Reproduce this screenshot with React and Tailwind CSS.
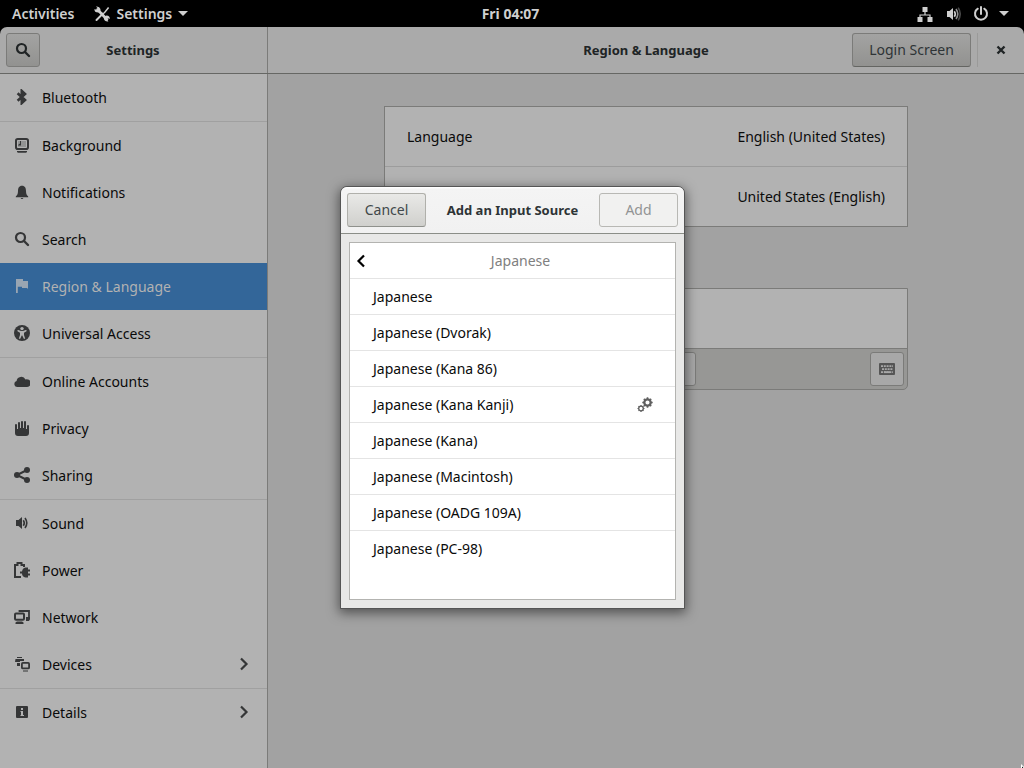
import React from "react";

const Svg = ({ children, size = 16, className = "" }) => (
  <svg
    width={size}
    height={size}
    viewBox="0 0 16 16"
    fill="currentColor"
    aria-hidden="true"
    className={`shrink-0 ${className}`}
  >
    {children}
  </svg>
);

const SearchIcon = (props) => (
  <Svg {...props}>
    <g fill="none" stroke="currentColor" strokeWidth="2.2">
      <circle cx="6.5" cy="6.5" r="4.5" />
      <path d="M10 10l4 4" strokeWidth="2.4" strokeLinecap="round" />
    </g>
  </Svg>
);

const Chevron = (props) => (
  <Svg {...props}>
    <path d="M5 2.5L10.5 8L5 13.5" fill="none" stroke="currentColor" strokeWidth="2.2" />
  </Svg>
);

const Speaker = ({ dim, ...props }) => (
  <Svg {...props}>
    <path d="M2 5h2.5L8 2v12l-3.5-3H2z" />
    <g fill="none" stroke="currentColor" strokeWidth="1.6">
      <path d="M9.3 5.2q2 2.8 0 5.6" />
      <path d="M11 3q3.6 5 0 10" opacity={dim ? 0.7 : 1} />
      {dim && <path d="M13.2 1.6q4 6.4 0 12.8" opacity="0.35" />}
    </g>
  </Svg>
);

const icons = {
  bluetooth: (
    <Svg>
      <path d="M3.6 4.3L11 11L7.8 14V2L11 5L3.6 11.7" fill="none" stroke="currentColor" strokeWidth="2.6" />
    </Svg>
  ),
  background: (
    <Svg>
      <rect x="2" y="2" width="12" height="10" rx="1.8" fill="none" stroke="currentColor" strokeWidth="2" />
      <path d="M4 4h8v6H4z" opacity="0.25" />
      <path d="M7 4v4.5H4V8l2-1.5V4z" />
      <path d="M3 14h10v1l-1 .8H4L3 15z" />
    </Svg>
  ),
  notifications: (
    <Svg>
      <path d="M8 1.8C5 1.8 4 4.2 4 7c0 3-.9 4.400-2.200 5.400V13.200H14.200V12.400C12.900 11.400 12 10 12 7c0-2.800-1-5.200-4-5.200z" />
      <path d="M6.700 14h2.600a1.300 1.100 0 0 1-2.600 0z" />
    </Svg>
  ),
  search: <SearchIcon />,
  region: (
    <Svg>
      <path d="M2 1h7v2h5v8l-1-1H8V8.800H3.800V15H2z" />
    </Svg>
  ),
  access: (
    <Svg>
      <circle cx="8" cy="8" r="8" />
      <g fill="#b2b2b2">
        <circle cx="8" cy="3.600" r="1.700" />
        <path d="M3.500 5h.8L7 6h2l2.700-1h.8v1.200L10 7.700V10l1.200 3.800h-1.400L8.300 10.500h-.6L6.200 13.800H4.800L6 10V7.700L3.500 6.200z" />
      </g>
    </Svg>
  ),
  cloud: (
    <Svg>
      <path d="M3 14a3 3 0 0 1-.4-5.900A4.700 4.700 0 0 1 11.500 6.500A3.900 3.900 0 1 1 12.200 14z" />
    </Svg>
  ),
  privacy: (
    <Svg>
      <path d="M1 4.500Q2 3.500 3 4.500V9h1V2.500Q5 1.500 6 2.500V8h1V1.500Q8 .5 9 1.500V8h1V1.500Q11 .5 12 1.500V9h1V5.500Q14 4.500 15 5.500V13q0 3-3 3H4q-3 0-3-3z" />
    </Svg>
  ),
  sharing: (
    <Svg>
      <circle cx="13" cy="3" r="3" />
      <circle cx="3" cy="8" r="3" />
      <circle cx="13" cy="13" r="3" />
      <path d="M13 3L3 8l10 5" fill="none" stroke="currentColor" strokeWidth="2" />
    </Svg>
  ),
  sound: <Speaker />,
  power: (
    <Svg>
      <path d="M7 15H1V3h2.500V1h4v2H10v2" fill="none" stroke="currentColor" strokeWidth="2" />
      <path d="M14 5.500v10h-2.500Q8 14.500 8 11.500H6V9.500h2Q8.500 6 11.500 5.500zM14 7.500h2v2h-2zM14 11.500h2v2h-2z" />
    </Svg>
  ),
  network: (
    <Svg>
      <path d="M5.500 3V2H15v7.500H13" fill="none" stroke="currentColor" strokeWidth="1.800" />
      <rect x="1" y="4.500" width="9" height="6.300" rx="1" fill="none" stroke="currentColor" strokeWidth="2" />
      <path d="M3 12.500h5l1.500 1V15h-8v-1.500zM12 8h4v2l-1 2H12z" />
    </Svg>
  ),
  devices: (
    <Svg>
      <path d="M3 1h5v1H3zM1.500 3H10v2H6v1H1zM3 7h3v3H3zM9 14.500h5v1H9z" />
      <rect x="7.900" y="6.900" width="7.200" height="5.500" rx="1" fill="none" stroke="currentColor" strokeWidth="1.800" />
    </Svg>
  ),
  details: (
    <Svg>
      <rect x="2" y="2" width="12" height="12" rx="1" />
      <path d="M7 4h2v2H7zM6.500 7H9v4h1v1H6.500v-1H7V8h-.500z" fill="#b2b2b2" />
    </Svg>
  ),
};

const groups = [
  [["bluetooth", "Bluetooth"]],
  [
    ["background", "Background"],
    ["notifications", "Notifications"],
    ["search", "Search"],
    ["region", "Region & Language"],
    ["access", "Universal Access"],
  ],
  [
    ["cloud", "Online Accounts"],
    ["privacy", "Privacy"],
    ["sharing", "Sharing"],
  ],
  [
    ["sound", "Sound"],
    ["power", "Power"],
    ["network", "Network"],
    ["devices", "Devices", true],
  ],
  [["details", "Details", true]],
];

const layouts = [
  "Japanese",
  "Japanese (Dvorak)",
  "Japanese (Kana 86)",
  "Japanese (Kana Kanji)",
  "Japanese (Kana)",
  "Japanese (Macintosh)",
  "Japanese (OADG 109A)",
  "Japanese (PC-98)",
];

const MenuArrow = () => (
  <svg width="10" height="5" viewBox="0 0 10 5" fill="currentColor" aria-hidden="true">
    <path d="M0 0h10L5 5z" />
  </svg>
);

function TopBar() {
  return (
    <header className="flex h-[27px] shrink-0 items-center bg-black font-semibold text-[#cfcfcf]">
      <div className="flex flex-1 items-center gap-5 pl-3">
        <button type="button">Activities</button>
        <button type="button" className="flex items-center gap-[6px]">
          <Svg>
            <path d="M3.500 3.500L13 13.500" fill="none" stroke="currentColor" strokeWidth="2.600" strokeLinecap="round" />
            <path d="M2.500 14L9 7.500" fill="none" stroke="currentColor" strokeWidth="2" strokeLinecap="round" />
            <path d="M9.500 6.800L14 1l1.200 1L10.500 7.800z" />
            <path d="M2 .5L4 2.500L2.800 4L.5 3Q0 6.500 4.500 6.600Q7 5.500 6.400 3Q5.500 0 2 .5zM14.500 15.500L12.300 13.300L13.300 12L15.800 13Q16 9.800 12.500 9.500Q9.800 10 9.800 12.500Q10.500 16 14.500 15.500z" />
          </Svg>
          Settings
          <MenuArrow />
        </button>
      </div>
      <time className="font-bold">Fri 04:07</time>
      <button type="button" aria-label="System menu" className="flex flex-1 items-center justify-end gap-3 pr-[15px]">
        <Svg>
          <path d="M5.500 1h5v5h-5zM.5 11h5v5h-5zM10.500 11h5v5h-5z" />
          <path d="M8 5v4M3 12V9h10v3" fill="none" stroke="currentColor" strokeWidth="1.200" />
        </Svg>
        <Speaker dim />
        <span className="flex items-center gap-[10px]">
          <Svg>
            <path d="M4.800 2.700a6 6 0 1 0 6.400 0M8 1v7" fill="none" stroke="currentColor" strokeWidth="2" strokeLinecap="round" />
          </Svg>
          <MenuArrow />
        </span>
      </button>
    </header>
  );
}

function Sidebar() {
  return (
    <nav aria-label="Settings panels" className="w-[268px] shrink-0 border-r border-[#7b7b79] bg-[#b2b2b2]">
      {groups.map((group, index) => (
        <ul key={index} className="border-b border-[#a0a0a0] last:border-b-0">
          {group.map(([icon, label, more]) => {
            const current = icon === "region";
            return (
              <li key={icon}>
                <a
                  href={`#${icon}`}
                  aria-current={current ? "page" : undefined}
                  className={`flex h-[47px] items-start pt-[15px] pr-[15px] pl-[14px] ${
                    current ? "bg-[#336699] text-[#b2b2b2]" : "text-[#0a0a0a]"
                  }`}
                >
                  <span className={current ? "text-[#99a5b2]" : "text-[#353637]"}>{icons[icon]}</span>
                  <span className="ml-3 flex-1 leading-[18px]">{label}</span>
                  {more && <Chevron className="text-[#353637]" />}
                </a>
              </li>
            );
          })}
        </ul>
      ))}
    </nav>
  );
}

function SettingsPanel() {
  return (
    <main className="flex-1 bg-[#a2a2a2] px-8 pt-8">
      <div className="mx-auto max-w-[524px]">
        <ul className="border border-[#7b7b79] bg-[#b2b2b2] text-[#0a0a0a]">
          <li className="flex h-[60px] items-center justify-between border-b border-[#9c9c9c] px-[22px]">
            <span>Language</span>
            <span>English (United States)</span>
          </li>
          <li className="flex h-[59px] items-center justify-end px-[22px]">United States (English)</li>
        </ul>
        <section className="mt-[61px] rounded-b-[5px] border border-[#7b7b79] bg-[#979795]">
          <div className="h-[60px] border-b border-[#7b7b79] bg-[#b2b2b2]" />
          <div className="flex h-10 items-center justify-between pr-[3px] pb-px pl-1 text-[#555]">
            <div className="flex h-[34px] w-[307px] justify-end rounded-[3px] border border-[#7b7b79] bg-[#a8a8a8]">
              <button type="button" aria-label="Move down" className="w-7">
                <Chevron className="rotate-90" />
              </button>
            </div>
            <button
              type="button"
              aria-label="Show keyboard layout"
              className="flex size-[34px] items-center justify-center rounded-[3px] border border-[#7b7b79] bg-[#a8a8a8]"
            >
              <Svg>
                <rect y="2" width="16" height="12" rx="1" />
                <path
                  d="M2 5.200h12M3 8.200h11M2 11.200h12"
                  fill="none"
                  stroke="#a8a8a8"
                  strokeWidth="1.800"
                  strokeDasharray="2 0.8"
                />
                <path d="M5 11.200h6" stroke="#a8a8a8" strokeWidth="1.800" />
              </Svg>
            </button>
          </div>
        </section>
      </div>
    </main>
  );
}

const gearTeeth = [0, 45, 90, 135];

function Gears() {
  return (
    <Svg className="text-[#606060]">
      <g fill="none" stroke="currentColor">
        <circle cx="10.500" cy="5.500" r="3.200" strokeWidth="2.300" />
        <circle cx="4" cy="11.500" r="2.300" strokeWidth="1.300" />
        {gearTeeth.map((angle) => (
          <g key={angle}>
            <path d="M10.500 .3v2M10.500 8.700v2" strokeWidth="1.600" transform={`rotate(${angle} 10.5 5.5)`} />
            <path d="M4 8v1.400M4 13.600v1.400" strokeWidth="1.100" transform={`rotate(${angle} 4 11.5)`} />
          </g>
        ))}
      </g>
    </Svg>
  );
}

function InputSourceDialog() {
  return (
    <div
      role="dialog"
      aria-modal="true"
      aria-labelledby="dialog-title"
      className="w-[345px] overflow-hidden rounded-t-[7px] border border-[#555] bg-[#e8e8e7] bg-clip-padding shadow-[0_3px_12px_1px_rgba(0,0,0,0.5)]"
    >
      <div className="flex h-[47px] items-center justify-between border-b border-[#8b8e88] bg-linear-to-b from-white from-2% via-[#f4f4f4] via-4% to-[#f1f1f1] px-[6px]">
        <button
          type="button"
          className="h-[34px] w-[79px] rounded-[3px] border border-[#b0b0ab] border-b-[#8f918c] bg-linear-to-b from-[#e9e9e7] to-[#d0d0cd] text-[#41484a]"
        >
          Cancel
        </button>
        <h1 id="dialog-title" className="text-[13px] font-bold text-[#2e3436]">
          Add an Input Source
        </h1>
        <button
          type="button"
          disabled
          className="h-[34px] w-[79px] rounded-[3px] border border-[#b8b8b4] bg-[#f1f1f0] text-[#919494]"
        >
          Add
        </button>
      </div>
      <div className="p-2">
        <div className="border border-[#b3b3b0] bg-white pb-8">
          <button
            type="button"
            className="grid h-9 w-full grid-cols-[auto_1fr] items-center border-b border-[#e4e4e4] pl-[3px] text-[#808080]"
          >
            <Chevron className="rotate-180 text-black" />
            <span className="pr-[3px]">Japanese</span>
          </button>
          <ul className="text-[#0a0a0a]">
            {layouts.map((name) => (
              <li key={name} className="border-b border-[#e4e4e4] last:border-b-transparent">
                <button type="button" className="flex h-[35px] w-full items-center justify-between pr-[22px] pl-[23px] text-left">
                  {name}
                  {name === "Japanese (Kana Kanji)" && <Gears />}
                </button>
              </li>
            ))}
          </ul>
        </div>
      </div>
    </div>
  );
}

export default function App() {
  return (
    <div className="flex min-h-screen flex-col bg-black font-['Noto_Sans',sans-serif] text-[14px] leading-5">
      <TopBar />
      <div className="relative flex flex-1 flex-col overflow-hidden rounded-t-[7px]">
        <header className="flex h-[47px] shrink-0 border-b border-[#666764] bg-[#aaaaaa] text-[#202425]">
          <div className="flex w-[268px] shrink-0 items-center border-r border-[#7b7b79] px-[6px]">
            <button
              type="button"
              aria-label="Search"
              className="flex size-[34px] items-center justify-center rounded-[3px] border border-[#7b7b79] bg-linear-to-b from-[#a3a3a2] to-[#929290]"
            >
              <SearchIcon />
            </button>
            <h2 className="flex-1 pr-[35px] text-center text-[13px] font-bold">Settings</h2>
          </div>
          <div className="grid flex-1 grid-cols-[1fr_auto_1fr] items-center">
            <h2 className="col-start-2 text-[13px] font-bold">Region &amp; Language</h2>
            <div className="flex items-center justify-end">
              <button
                type="button"
                className="h-[34px] w-[119px] rounded-[3px] border border-[#7b7b79] border-b-[#646562] bg-linear-to-b from-[#a3a3a2] to-[#929290] text-[#2e3436]"
              >
                Login Screen
              </button>
              <div className="ml-[6px] flex h-[34px] items-center border-l border-[#9a9a99] px-[15px]">
                <button type="button" aria-label="Close">
                  <Svg>
                    <path d="M4.500 4.500l7 7M11.500 4.500l-7 7" fill="none" stroke="currentColor" strokeWidth="2.400" />
                  </Svg>
                </button>
              </div>
            </div>
          </div>
        </header>
        <div className="flex flex-1">
          <Sidebar />
          <SettingsPanel />
        </div>
        <div className="absolute inset-0 flex items-center justify-center pl-px">
          <InputSourceDialog />
        </div>
        <svg width="4" height="4" viewBox="0 0 4 4" aria-hidden="true" className="absolute right-0 bottom-0">
          <path d="M1 0L4 3V4H1z" fill="#fff" />
          <path d="M2 2.500L3.500 4H2z" fill="#000" />
        </svg>
      </div>
    </div>
  );
}
